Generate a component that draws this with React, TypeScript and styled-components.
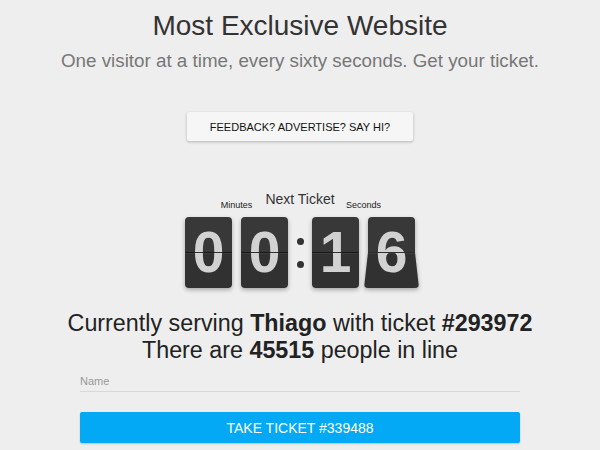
import React from "react";
import styled, { createGlobalStyle } from "styled-components";

const GlobalStyle = createGlobalStyle`
  html, body {
    margin: 0;
    padding: 0;
    background: #eeeeee;
  }
  body {
    font-family: "Liberation Sans", Arial, sans-serif;
    color: #333;
  }
`;

const Page = styled.div`
  width: 600px;
  height: 450px;
  display: flex;
  flex-direction: column;
  align-items: center;
  overflow: hidden;
`;

const Title = styled.h1`
  margin: 10px 0 0;
  font-size: 28px;
  line-height: 32px;
  font-weight: normal;
  color: #333;
`;

const Subtitle = styled.p`
  margin: 8px 0 0;
  font-size: 18.8px;
  line-height: 22px;
  color: #777;
`;

const FeedbackButton = styled.button`
  margin-top: 40px;
  width: 226px;
  height: 29px;
  border: none;
  border-radius: 2px;
  background: #f6f6f6;
  box-shadow: 0 1px 3px rgba(0, 0, 0, 0.25);
  font-family: "Liberation Sans", Arial, sans-serif;
  font-size: 11px;
  color: #111;
  text-transform: uppercase;
  cursor: pointer;
`;

const Clock = styled.div`
  margin-top: 50px;
  display: flex;
  align-items: flex-end;
`;

const Group = styled.div`
  display: flex;
  flex-direction: column;
  align-items: center;
`;

const SmallLabel = styled.div`
  font-size: 9px;
  line-height: 11px;
  color: #222;
  margin-bottom: 6px;
`;

const Cards = styled.div`
  display: flex;
  gap: 9px;
`;

const Card = styled.div<{ $flip?: boolean }>`
  position: relative;
  isolation: isolate;
  width: 47px;
  height: 71px;
  border-radius: 4px;
  background: ${(p) =>
    p.$flip
      ? "linear-gradient(#383838 0 50%, transparent 50%)"
      : "linear-gradient(#383838 0 50%, #313131 50%)"};
  filter: drop-shadow(0 2px 2px rgba(0, 0, 0, 0.3));
  text-align: center;
  font-size: 57px;
  line-height: 71px;
  font-weight: bold;
  color: #d2d2d2;

  &::before {
    content: "";
    display: ${(p) => (p.$flip ? "block" : "none")};
    position: absolute;
    z-index: -1;
    left: -4px;
    right: -4px;
    top: 50%;
    bottom: 0;
    background: #313131;
    border-radius: 0 0 4px 4px;
    clip-path: polygon(4px 0, calc(100% - 4px) 0, 100% 100%, 0 100%);
  }

  &::after {
    content: "";
    position: absolute;
    left: 0;
    right: 0;
    top: 35px;
    height: 1px;
    background: rgba(20, 20, 20, 0.85);
    box-shadow: 0 1px 0 rgba(255, 255, 255, 0.06);
  }
`;

const Middle = styled.div`
  width: 24px;
  display: flex;
  flex-direction: column;
  align-items: center;
`;

const NextLabel = styled.div`
  width: 24px;
  display: flex;
  justify-content: center;
  white-space: nowrap;
  font-size: 14px;
  line-height: 16px;
  color: #333;
  margin-bottom: 10px;
`;

const Colon = styled.div`
  height: 71px;
  display: flex;
  flex-direction: column;
  justify-content: center;
  gap: 16px;
`;

const Dot = styled.span`
  width: 7px;
  height: 7px;
  border-radius: 50%;
  background: #333;
`;

const Status = styled.div`
  margin-top: 22px;
  font-size: 23.3px;
  line-height: 27px;
  color: #222;
  text-align: center;
`;

const NameInput = styled.input`
  margin-top: 9px;
  width: 440px;
  padding: 2px 0 4px;
  border: none;
  border-bottom: 1px solid #d8d8d8;
  background: transparent;
  font-family: "Liberation Sans", Arial, sans-serif;
  font-size: 11px;
  outline: none;
  &::placeholder {
    color: #999;
  }
`;

const TakeButton = styled.button`
  margin-top: 20px;
  width: 440px;
  height: 31px;
  border: none;
  border-radius: 2px;
  background: #03a9f4;
  box-shadow: 0 1px 2px rgba(0, 0, 0, 0.2);
  color: #fff;
  font-family: "Liberation Sans", Arial, sans-serif;
  font-size: 14px;
  cursor: pointer;
`;

export default function App() {
  return (
    <>
      <GlobalStyle />
      <Page>
        <Title>Most Exclusive Website</Title>
        <Subtitle>One visitor at a time, every sixty seconds. Get your ticket.</Subtitle>
        <FeedbackButton>Feedback? Advertise? Say hi?</FeedbackButton>
        <Clock>
          <Group>
            <SmallLabel>Minutes</SmallLabel>
            <Cards>
              <Card>0</Card>
              <Card>0</Card>
            </Cards>
          </Group>
          <Middle>
            <NextLabel>Next Ticket</NextLabel>
            <Colon>
              <Dot />
              <Dot />
            </Colon>
          </Middle>
          <Group>
            <SmallLabel>Seconds</SmallLabel>
            <Cards>
              <Card>1</Card>
              <Card $flip>6</Card>
            </Cards>
          </Group>
        </Clock>
        <Status>
          Currently serving <b>Thiago</b> with ticket <b>#293972</b>
          <br />
          There are <b>45515</b> people in line
        </Status>
        <NameInput placeholder="Name" />
        <TakeButton>TAKE TICKET #339488</TakeButton>
      </Page>
    </>
  );
}
